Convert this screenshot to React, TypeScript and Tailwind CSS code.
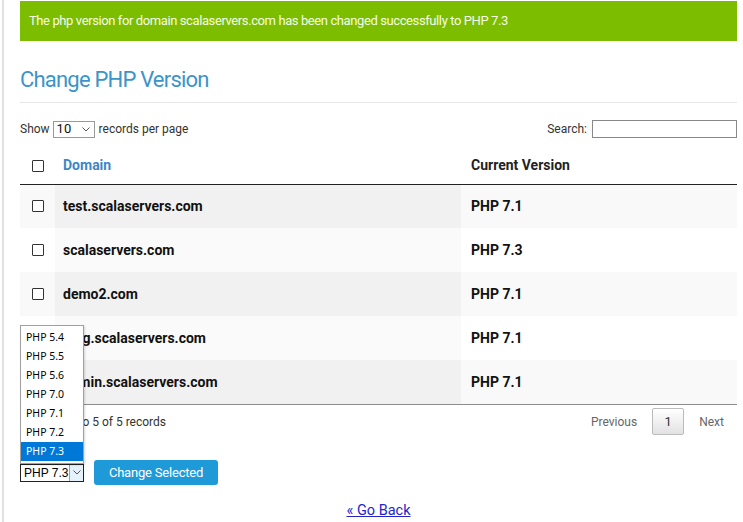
import React from "react";

const rows = [
  { d: "test.scalaservers.com", v: "PHP 7.1" },
  { d: "scalaservers.com", v: "PHP 7.3" },
  { d: "demo2.com", v: "PHP 7.1" },
  { d: "blog.scalaservers.com", v: "PHP 7.1" },
  { d: "admin.scalaservers.com", v: "PHP 7.1" },
];

const versions = ["PHP 5.4", "PHP 5.5", "PHP 5.6", "PHP 7.0", "PHP 7.1", "PHP 7.2", "PHP 7.3"];

function Box() {
  return <span className="block w-[12px] h-[12px] border border-[#333] rounded-[1px] bg-white" />;
}

function Chevron() {
  return (
    <svg width="8" height="5" viewBox="0 0 8 5">
      <path d="M0.5 0.5 L4 4 L7.5 0.5" fill="none" stroke="#555" strokeWidth="1" />
    </svg>
  );
}

export default function App() {
  return (
    <div className="min-h-[522px] ml-[2px] border-l-2 border-[#e2e2e2] pl-[16px] pr-[6px] pt-px font-['Roboto',sans-serif] text-[#333] bg-white">
      <div className="h-10 bg-[#7dbd00] text-[#f4fbe6] text-[13px] tracking-[-0.4px] pl-[9px] flex items-center">
        The php version for domain scalaservers.com has been changed successfully to PHP 7.3
      </div>

      <h1 className="mt-[24px] mb-[7px] text-[22px] leading-[30px] tracking-[-0.8px] text-[#3b95c8] font-normal">
        Change PHP Version
      </h1>
      <div className="border-t border-[#e6e6e6]" />

      <div className="mt-[17px] flex items-center justify-between text-[12px] h-[18px]">
        <div className="flex items-center">
          <span>Show</span>
          <span className="ml-[3px] mr-[4px] w-[42px] h-[17px] border border-[#999] flex items-center justify-between pl-[3px] pr-[4px] text-[13px] text-[#111]">
            10
            <Chevron />
          </span>
          <span>records per page</span>
        </div>
        <div className="flex items-center">
          <span>Search:</span>
          <span className="ml-[5px] w-[145px] h-[18px] border border-[#888] bg-white" />
        </div>
      </div>

      <table className="mt-[10px] w-full table-fixed border-collapse text-[14px]">
        <colgroup>
          <col className="w-[35px]" />
          <col className="w-[406px]" />
          <col />
        </colgroup>
        <thead>
          <tr className="h-[36px] border-b border-[#222]">
            <th className="pl-3 text-left align-middle">
              <Box />
            </th>
            <th className="pl-2 text-left font-bold text-[#3d86c6]">Domain</th>
            <th className="pl-[10px] text-left font-bold text-[#222]">Current Version</th>
          </tr>
        </thead>
        <tbody>
          {rows.map((r, i) => {
            const odd = i % 2 === 0;
            return (
              <tr key={r.d} className={`h-[44px] ${odd ? "bg-[#f9f9f9]" : "bg-white"}`}>
                <td className="pl-3 align-middle">
                  <Box />
                </td>
                <td className={`pl-2 font-bold text-[#111] ${odd ? "bg-[#f1f1f1]" : "bg-[#fafafa]"}`}>{r.d}</td>
                <td className="pl-[10px] font-bold text-[#111]">{r.v}</td>
              </tr>
            );
          })}
        </tbody>
      </table>
      <div className="border-t border-[#8c8c8c]" />

      <div className="mt-[3px] h-[27px] flex items-center justify-between text-[12px]">
        <span>Showing 1 to 5 of 5 records</span>
        <div className="flex items-center text-[#666]">
          <span className="px-[13px]">Previous</span>
          <span className="mx-[2px] w-[32px] h-[27px] flex items-center justify-center border border-[#bbb] rounded-[2px] bg-gradient-to-b from-white to-[#e2e2e2] text-[#333] text-[13px]">
            1
          </span>
          <span className="px-[13px]">Next</span>
        </div>
      </div>

      <div className="mt-[9px] text-[13px] leading-[16px] font-bold text-[#111]">ACTION</div>
      <div className="flex items-center h-[25px]">
        <div className="relative">
          <div className="absolute left-0 bottom-full w-[64px] border border-[#a0a0a0] bg-white py-[2px] shadow-[1px_1px_2px_rgba(0,0,0,0.15)] font-['Noto_Sans',sans-serif] text-[10.5px] text-black">
            {versions.map((v) => (
              <div
                key={v}
                className={`h-[19px] leading-[19px] pl-[5px] whitespace-nowrap ${v === "PHP 7.3" ? "bg-[#0078d7] text-white" : ""}`}
              >
                {v}
              </div>
            ))}
          </div>
          <div className="w-[64px] h-[18px] border border-[#222] flex items-stretch bg-white font-['Liberation_Sans',sans-serif] text-[12px] text-black">
            <span className="flex-1 pl-[3px] leading-[16px] whitespace-nowrap overflow-hidden">PHP 7.3</span>
            <span className="w-[14px] shrink-0 bg-[#e5f1fb] border-l border-[#7aa7d6] flex items-center justify-center">
              <Chevron />
            </span>
          </div>
        </div>
        <button className="ml-[10px] h-[25px] w-[124px] rounded-[3px] bg-[#1f9ad9] text-white text-[13px] tracking-[-0.2px]">
          Change Selected
        </button>
      </div>

      <div className="mt-[18px] text-center text-[14.5px] leading-[16px]">
        <a href="#" className="text-[#2424cc] underline">« Go Back</a>
      </div>
    </div>
  );
}
